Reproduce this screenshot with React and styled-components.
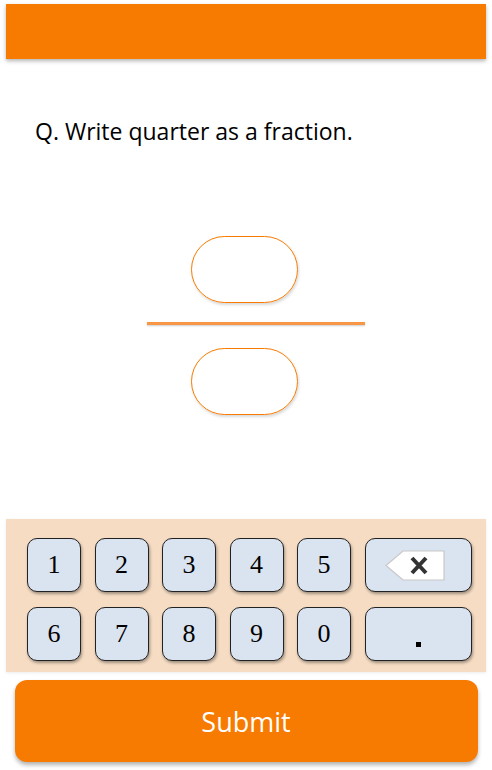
import styled, { createGlobalStyle } from "styled-components";

const GlobalStyle = createGlobalStyle`
  body {
    margin: 0;
    background: #fff;
    font-family: "Open Sans", "Liberation Sans", sans-serif;
  }
`;

const ORANGE = "#f77b00";
const LIGHT_ORANGE = "#f79646";

const keys = [
  ["1", "2", "3", "4", "5", "back"],
  ["6", "7", "8", "9", "0", "."],
];

export default function App() {
  return (
    <Page>
      <GlobalStyle />
      <Header />
      <Question>Q. Write quarter as a fraction.</Question>

      <Fraction>
        <AnswerBox />
        <FractionBar />
        <AnswerBox />
      </Fraction>

      <Keypad>
        {keys.map((row, i) => (
          <KeyRow key={i}>
            {row.map(k => (
              <Key key={k} wide={k === "back" || k === "."}>
                {k === "back" ? <BackspaceIcon /> : k === "." ? <Dot /> : k}
              </Key>
            ))}
          </KeyRow>
        ))}
      </Keypad>

      <SubmitButton>Submit</SubmitButton>
    </Page>
  );
};

function BackspaceIcon() {
  return (
    <BackSvg width="60" height="31" viewBox="0 0 60 31">
      <polygon points="18,1 59,1 59,30 18,30 1,15.5" fill="#fff" stroke="#c8c8c8" strokeWidth="1.2" />
      <path d="M27 8 L41 23 M41 8 L27 23" stroke="#333" strokeWidth="4" strokeLinecap="butt" />
    </BackSvg>
  );
}

const Page = styled.div`
  width: 492px;
  height: 770px;
  display: flex;
  flex-direction: column;
  align-items: center;
  box-sizing: border-box;
  padding-top: 4px;
`;

const Header = styled.div`
  width: 480px;
  height: 55px;
  background-color: ${ORANGE};
  box-shadow: 0 2px 4px rgba(0, 0, 0, 0.3);
`;

const Question = styled.div`
  align-self: flex-start;
  margin: 56px 0 0 35px;
  font-family: "Open Sans", sans-serif;
  font-size: 23px;
  color: #000;
  line-height: 32px;
`;

const Fraction = styled.div`
  margin-top: 89px;
  width: 218px;
  display: flex;
  flex-direction: column;
  align-items: center;
  margin-left: 20px;
`;

const AnswerBox = styled.div`
  width: 107px;
  height: 67px;
  box-sizing: border-box;
  border: 1.3px solid ${ORANGE};
  border-radius: 34px;
  box-shadow: 1px 2px 3px rgba(0, 0, 0, 0.15);
  margin-right: 23px;
`;

const FractionBar = styled.div`
  width: 218px;
  height: 3px;
  background-color: ${LIGHT_ORANGE};
  margin: 19px 0 23px;
  box-shadow: 0 1px 2px rgba(0, 0, 0, 0.2);
`;

const Keypad = styled.div`
  margin-top: 104px;
  width: 480px;
  height: 153px;
  background-color: #f5dcc3;
  box-shadow: 0 1px 3px rgba(0, 0, 0, 0.08);
  box-sizing: border-box;
  padding: 19px 0 0 21px;
  display: flex;
  flex-direction: column;
  gap: 15px;
`;

const KeyRow = styled.div`
  display: flex;
  gap: 13.5px;
`;

const Key = styled.button`
  width: ${p => (p.wide ? "107px" : "54px")};
  height: 54px;
  padding: 0;
  box-sizing: border-box;
  background-color: #dae3f0;
  border: 1.3px solid #222;
  border-radius: 10px;
  box-shadow: 1px 2px 3px rgba(0, 0, 0, 0.35);
  font-family: "Liberation Serif", "DejaVu Serif", serif;
  font-size: 26px;
  color: #000;
  display: flex;
  justify-content: center;
  align-items: center;
`;

const BackSvg = styled.svg`
  margin-right: 6px;
`;

const Dot = styled.span`
  width: 5px;
  height: 5px;
  background: #000;
  margin-top: 20px;
`;

const SubmitButton = styled.button`
  margin-top: 8px;
  width: 463px;
  height: 82px;
  border: none;
  border-radius: 12px;
  background-color: ${ORANGE};
  box-shadow: 0 3px 4px rgba(0, 0, 0, 0.3);
  color: #fff;
  font-family: "Open Sans", sans-serif;
  font-size: 27px;
`;
